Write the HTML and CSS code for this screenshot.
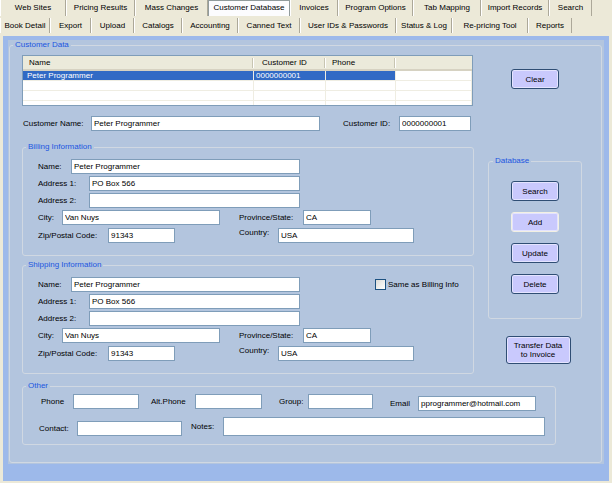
FILE: index.html
```html
<!DOCTYPE html>
<html lang="en">
<head>
<meta charset="utf-8">
<title>Customer Database</title>
<link rel="stylesheet" href="styles.css">
</head>
<body>
<div class="tabs">
  <div class="tabrow row1">
    <div class="tab">Web Sites</div>
    <div class="tab">Pricing Results</div>
    <div class="tab">Mass Changes</div>
    <div class="tab sel">Customer Database</div>
    <div class="tab">Invoices</div>
    <div class="tab">Program Options</div>
    <div class="tab">Tab Mapping</div>
    <div class="tab">Import Records</div>
    <div class="tab">Search</div>
  </div>
  <div class="tabrow row2">
    <div class="tab">Book Detail</div>
    <div class="tab">Export</div>
    <div class="tab">Upload</div>
    <div class="tab">Catalogs</div>
    <div class="tab">Accounting</div>
    <div class="tab">Canned Text</div>
    <div class="tab">User IDs &amp; Passwords</div>
    <div class="tab">Status &amp; Log</div>
    <div class="tab">Re-pricing Tool</div>
    <div class="tab">Reports</div>
  </div>
</div>

<div class="panel">
  <div class="groupbg">
    <fieldset class="fs-main">
      <legend>Customer Data</legend>
      <div class="top">
        <div class="leftcol">
          <div class="list">
            <div class="lv-head">
              <div class="hc h1"><span>Name</span><span class="hsep"></span></div>
              <div class="hc h2"><span>Customer ID</span><span class="hsep"></span></div>
              <div class="hc h3"><span>Phone</span><span class="hsep"></span></div>
              <div class="hc"></div>
            </div>
            <div class="lv-row sel">
              <div class="c1">Peter Programmer</div>
              <div>0000000001</div>
              <div></div>
              <div></div>
            </div>
            <div class="lv-row"><div></div><div></div><div></div><div></div></div>
            <div class="lv-row"><div></div><div></div><div></div><div></div></div>
            <div class="lv-row"><div></div><div></div><div></div><div></div></div>
          </div>

          <div class="cname">
            <span class="lbl w68">Customer Name:</span>
            <input class="tb w229" type="text" value="Peter Programmer">
            <span class="lbl w56 ml23">Customer ID:</span>
            <input class="tb w72" type="text" value="0000000001">
          </div>

          <fieldset class="fs-sub billing">
            <legend>Billing Information</legend>
            <div class="frow">
              <span class="lbl w33">Name:</span>
              <input class="tb w229" type="text" value="Peter Programmer">
            </div>
            <div class="frow">
              <span class="lbl w51">Address 1:</span>
              <input class="tb w211" type="text" value="PO Box 566">
            </div>
            <div class="frow">
              <span class="lbl w51">Address 2:</span>
              <input class="tb w211" type="text" value="">
            </div>
            <div class="frow">
              <span class="lbl w24">City:</span>
              <input class="tb w158" type="text" value="Van Nuys">
              <span class="lbl w64 ml19">Province/State:</span>
              <input class="tb w68" type="text" value="CA">
            </div>
            <div class="frow zip">
              <span class="lbl w70">Zip/Postal Code:</span>
              <input class="tb w67" type="text" value="91343">
              <span class="lbl w39 ml64 up">Country:</span>
              <input class="tb w136" type="text" value="USA">
            </div>
          </fieldset>

          <fieldset class="fs-sub shipping">
            <legend>Shipping Information</legend>
            <div class="frow">
              <span class="lbl w33">Name:</span>
              <input class="tb w229" type="text" value="Peter Programmer">
              <label class="chk"><span class="box"></span>Same as Billing Info</label>
            </div>
            <div class="frow">
              <span class="lbl w51">Address 1:</span>
              <input class="tb w211" type="text" value="PO Box 566">
            </div>
            <div class="frow">
              <span class="lbl w51">Address 2:</span>
              <input class="tb w211" type="text" value="">
            </div>
            <div class="frow">
              <span class="lbl w24">City:</span>
              <input class="tb w158" type="text" value="Van Nuys">
              <span class="lbl w64 ml19">Province/State:</span>
              <input class="tb w68" type="text" value="CA">
            </div>
            <div class="frow zip">
              <span class="lbl w70">Zip/Postal Code:</span>
              <input class="tb w67" type="text" value="91343">
              <span class="lbl w39 ml64 up">Country:</span>
              <input class="tb w136" type="text" value="USA">
            </div>
          </fieldset>
        </div>

        <div class="rightcol">
          <button class="btn clear" type="button">Clear</button>
          <fieldset class="fs-db">
            <legend>Database</legend>
            <div class="dbbtns">
              <button class="btn" type="button">Search</button>
              <button class="btn hot" type="button">Add</button>
              <button class="btn" type="button">Update</button>
              <button class="btn" type="button">Delete</button>
            </div>
          </fieldset>
          <button class="btn transfer" type="button">Transfer Data<br>to Invoice</button>
        </div>
      </div>

      <fieldset class="fs-other">
        <legend>Other</legend>
        <div class="orow1">
          <span class="lbl w32">Phone</span>
          <input class="tb w66" type="text" value="">
          <span class="lbl w44 ml12">Alt.Phone</span>
          <input class="tb w67" type="text" value="">
          <span class="lbl w29 ml17">Group:</span>
          <input class="tb w65" type="text" value="">
          <span class="lbl w28 ml17 dn2">Email</span>
          <input class="tb w118 dn2" type="text" value="pprogrammer@hotmail.com">
        </div>
        <div class="orow2">
          <span class="lbl w38 contact dn4">Contact:</span>
          <input class="tb w105 dn4" type="text" value="">
          <span class="lbl w32 ml9 dn2">Notes:</span>
          <input class="tb w322 notes" type="text" value="">
        </div>
      </fieldset>
    </fieldset>
  </div>
</div>
</body>
</html>
```

FILE: styles.css
```css
* { box-sizing: border-box; }
html, body { margin: 0; padding: 0; }
body {
  width: 612px;
  height: 483px;
  overflow: hidden;
  background: #ECE9D8;
  font-family: "Liberation Sans", Arial, sans-serif;
  font-size: 8px;
  color: #000;
}

/* ---------- tabs ---------- */
.tabs { height: 36px; }
.tabrow { display: grid; }
.row1 {
  grid-template-columns: 66px 69px 73px 82px 48px 75px 68px 68px 43px;
  height: 16px;
}
.row2 {
  grid-template-columns: 50px 41px 43px 48px 56px 62px 96px 56px 76px 44px;
  height: 15px;
  margin-top: 2px;
}
.tab {
  border-left: 1px solid #FFFFFF;
  border-right: 1px solid #ACA899;
  text-align: center;
  white-space: nowrap;
  line-height: 15px;
}
.row1 .tab { line-height: 15px; }
.tab.sel {
  background: #FCFCFE;
  border-left: 1px solid #919B9C;
  border-right: 1px solid #919B9C;
  border-top: 1px solid #919B9C;
  line-height: 14px;
}

/* ---------- panel ---------- */
.panel {
  margin: 0 3px;
  height: 445px;
  background: #9DB9EA;
  padding: 4px 5px 17px 5px;
}
.groupbg {
  background: #B3C5DE;
  height: 424px;
  padding: 0 2px 0 1px;
}

fieldset {
  margin: 0;
  border: 1px solid #D0D8E2;
  border-radius: 3px;
  min-width: 0;
}
legend {
  color: #1B55E0;
  line-height: 10px;
  padding: 0 2px;
}

.fs-main {
  height: 423px;
  padding: 5px 0 0 12px;
}
.fs-main > legend { margin-left: -9px; }

.top { display: flex; }
.leftcol { width: 452px; flex: none; }
.rightcol {
  width: 94px;
  flex: none;
  margin-left: 14px;
  display: flex;
  flex-direction: column;
  align-items: center;
}

/* ---------- list view ---------- */
.list {
  width: 451px;
  height: 51px;
  border: 1px solid #7F9DB9;
  background: #FFFFFF;
  overflow: hidden;
}
.lv-head, .lv-row {
  display: grid;
  grid-template-columns: 231px 72px 70px 76px;
}
.lv-head {
  height: 15px;
  background: #EBEADB;
  border-bottom: 2px solid #D6D2C2;
}
.hc {
  display: flex;
  align-items: center;
  justify-content: space-between;
  line-height: 13px;
  white-space: nowrap;
}
.h1 { padding-left: 6px; }
.h2 { padding-left: 8px; }
.h3 { padding-left: 6px; }
.hsep {
  width: 2px;
  height: 10px;
  border-left: 1px solid #C7C5B2;
  border-right: 1px solid #FFFFFF;
}
.lv-row { height: 10px; }
.lv-row > div {
  border-right: 1px solid #EFEDE2;
  border-bottom: 1px solid #EFEDE2;
  line-height: 9px;
  padding-left: 2px;
  white-space: nowrap;
  overflow: hidden;
}
.lv-row > .c1 { padding-left: 4px; }
.lv-row.sel > div:not(:last-child) {
  background: #316AC5;
  color: #FFFFFF;
}

/* ---------- form bits ---------- */
.lbl { flex: none; white-space: nowrap; }
.tb {
  display: block;
  flex: none;
  height: 15px;
  margin: 0;
  padding: 0 2px;
  border: 1px solid #7F9DB9;
  background: #FFFFFF;
  font: inherit;
  color: #000;
  outline: none;
}

.w24 { width: 24px; } .w28 { width: 28px; } .w29 { width: 29px; }
.w32 { width: 32px; } .w33 { width: 33px; } .w38 { width: 38px; }
.w39 { width: 39px; } .w44 { width: 44px; } .w51 { width: 51px; }
.w56 { width: 56px; } .w64 { width: 64px; } .w65 { width: 65px; }
.w66 { width: 66px; } .w67 { width: 67px; } .w68 { width: 68px; }
.w70 { width: 70px; } .w72 { width: 72px; } .w105 { width: 105px; }
.w118 { width: 118px; } .w136 { width: 136px; } .w158 { width: 158px; }
.w211 { width: 211px; } .w229 { width: 229px; } .w322 { width: 322px; }
.ml9 { margin-left: 9px; } .ml12 { margin-left: 12px; } .ml17 { margin-left: 17px; }
.ml19 { margin-left: 19px; } .ml23 { margin-left: 23px; } .ml64 { margin-left: 64px; }

.cname {
  display: flex;
  align-items: center;
  height: 15px;
  margin-top: 10px;
  padding-left: 1px;
}

.fs-sub { padding: 7px 0 12px 15px; }
.fs-sub > legend { margin-left: -12px; }
.billing { margin-top: 11px; }
.shipping { margin-top: 4px; }

.frow {
  display: flex;
  align-items: center;
  height: 15px;
}
.frow + .frow { margin-top: 2px; }
.frow.zip { margin-top: 3px; }
.frow .up { align-self: flex-start; line-height: 9px; }

.chk {
  display: flex;
  align-items: center;
  margin-left: 75px;
  white-space: nowrap;
}
.box {
  width: 11px;
  height: 11px;
  border: 1px solid #1C5180;
  background: linear-gradient(135deg, #DCDCD7, #FFFFFF);
  margin-right: 2px;
}

/* ---------- buttons ---------- */
.btn {
  display: flex;
  align-items: center;
  justify-content: center;
  width: 48px;
  height: 20px;
  margin: 0;
  padding: 0;
  border: 1px solid #2F4E74;
  border-radius: 3px;
  background: #C9C9FD;
  box-shadow: inset 0 0 0 1px #E4E4FF;
  font: inherit;
  color: #000;
  line-height: 9px;
  text-align: center;
}
.btn.hot { border-color: #F2F0E2; }
.clear { margin-top: 14px; }

.fs-db {
  width: 94px;
  margin-top: 67px;
  padding: 15px 0 24px 0;
}
.fs-db > legend { margin-left: 4px; }
.dbbtns {
  display: flex;
  flex-direction: column;
  align-items: center;
  gap: 11px;
}
.transfer {
  width: 65px;
  height: 28px;
  margin-top: 17px;
  margin-left: 6px;
}

/* ---------- other ---------- */
.fs-other {
  width: 534px;
  margin-top: 7px;
  padding: 3px 0 8px 18px;
}
.fs-other > legend { margin-left: -15px; }
.orow1, .orow2 {
  display: flex;
  align-items: flex-start;
}
.orow1 .lbl, .orow2 .lbl { line-height: 15px; }
.orow2 { margin-top: 6px; }
.dn2 { margin-top: 2px; }
.dn4 { margin-top: 4px; }
.contact { margin-left: -2px; }
.notes { height: 19px; }
```
